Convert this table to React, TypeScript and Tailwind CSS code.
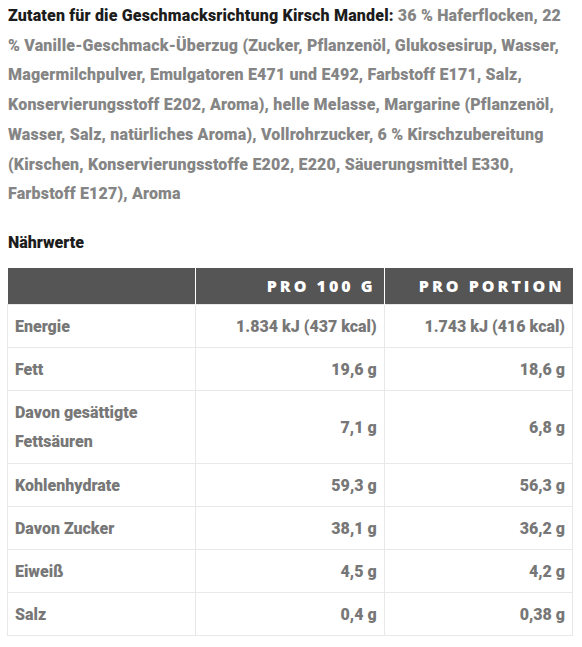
import React from "react";

const rows: [React.ReactNode, string, string, boolean][] = [
  ["Energie", "1.834 kJ (437 kcal)", "1.743 kJ (416 kcal)", false],
  ["Fett", "19,6 g", "18,6 g", false],
  [<>Davon gesättigte<br />Fettsäuren</>, "7,1 g", "6,8 g", true],
  ["Kohlenhydrate", "59,3 g", "56,3 g", false],
  ["Davon Zucker", "38,1 g", "36,2 g", false],
  ["Eiweiß", "4,5 g", "4,2 g", false],
  ["Salz", "0,4 g", "0,38 g", false],
];

export default function App() {
  const font = { fontFamily: '"Roboto", sans-serif' };
  const hfont = { fontFamily: '"Open Sans", sans-serif' };
  return (
    <div className="w-[582px] h-[647px] bg-white overflow-hidden" style={font}>
      <p className="pl-2 pr-1 pt-[1px] text-[16px] leading-[29.7px] tracking-[0.18px] font-black text-[#858585]">
        <span className="text-[#1c1c1c]">Zutaten für die Geschmacksrichtung Kirsch Mandel:</span> 36 % Haferflocken, 22
        <br />% Vanille-Geschmack-Überzug (Zucker, Pflanzenöl, Glukosesirup, Wasser,
        <br />Magermilchpulver, Emulgatoren E471 und E492, Farbstoff E171, Salz,
        <br />Konservierungsstoff E202, Aroma), helle Melasse, Margarine (Pflanzenöl,
        <br />Wasser, Salz, natürliches Aroma), Vollrohrzucker, 6 % Kirschzubereitung
        <br />(Kirschen, Konservierungsstoffe E202, E220, Säuerungsmittel E330,
        <br />Farbstoff E127), Aroma
      </p>
      <h3 className="pl-2 mt-[20px] text-[16px] leading-[28px] font-black text-[#1c1c1c]">Nährwerte</h3>
      <table className="ml-[7px] mt-[11px] w-[566px] table-fixed border-collapse text-[16px] font-black text-[#777777]">
        <thead>
          <tr className="bg-[#555555] h-[37px]">
            <th className="border-r border-white"></th>
            <th className="border-r border-white text-right pr-[8px] text-white text-[16px] tracking-[3px] font-extrabold" style={hfont}>
              PRO 100 G
            </th>
            <th className="text-right pr-[8px] text-white text-[16px] tracking-[3px] font-extrabold" style={hfont}>
              PRO PORTION
            </th>
          </tr>
        </thead>
        <tbody>
          {rows.map(([a, b, c, tall], i) => (
            <tr key={i} className={tall ? "h-[73px]" : "h-[43px]"}>
              <td className="border border-[#e8e8e8] px-[7px] py-[6px] leading-[29px] text-left align-middle">{a}</td>
              <td className="border border-[#e8e8e8] px-[7px] py-[6px] leading-[29px] text-right align-middle">{b}</td>
              <td className="border border-[#e8e8e8] px-[7px] py-[6px] leading-[29px] text-right align-middle">{c}</td>
            </tr>
          ))}
        </tbody>
      </table>
    </div>
  );
}
